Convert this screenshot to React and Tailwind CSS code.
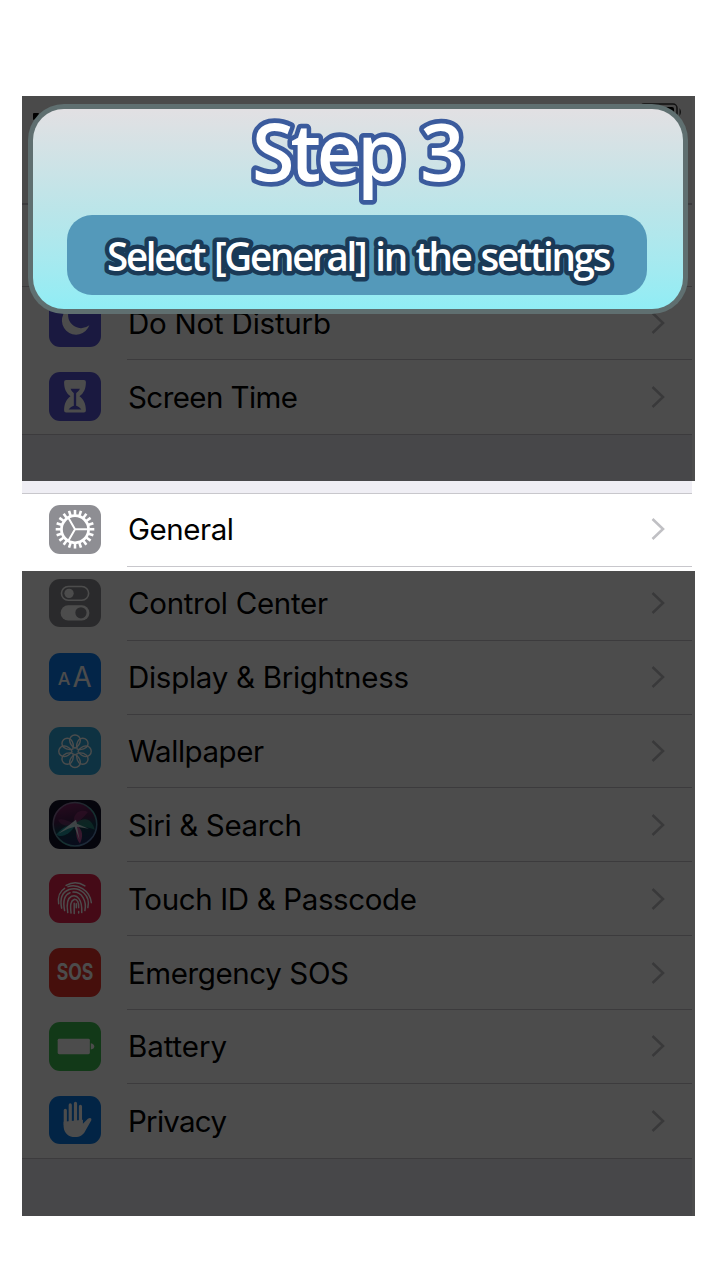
const petals = [0, 45, 90, 135, 180, 225, 270, 315];
const teeth = Array.from({ length: 20 }, (_, i) => i * 18);

const icons = {
  moon: {
    bg: "bg-[#5856d6]",
    art: <path d="M21.500 8.500A14.300 14.300 0 1 0 40.500 26.500A13.200 13.200 0 0 1 21.500 8.500z" fill="#fff" />,
  },
  hourglass: {
    bg: "bg-[#5856d6]",
    art: (
      <>
        <path d="M17 8h18q2 0 2 2c0 7-2 11-6.500 14.500c4.500 3.500 6.500 7.500 6.500 14.500q0 2-2 2H17q-2 0-2-2c0-7 2-11 6.500-14.500C17 21 15 17 15 10q0-2 2-2z" fill="#fff" />
        <path d="M21.500 17H31c-1 2.500-2.800 3.200-3.800 4.500v12.500c1.500.8 4 1.500 5.300 4H19.500c1.300-2.500 3.800-3.200 5.300-4V21.500c-1-1.300-2.500-2-3.300-4.500z" fill="#5856d6" />
      </>
    ),
  },
  gear: {
    bg: "bg-[#8e8e93]",
    art: (
      <g stroke="#fff" fill="none">
        {teeth.map((a) => (
          <path key={a} d="M26 10V5" strokeWidth="2.600" transform={`rotate(${a} 26 24.500)`} />
        ))}
        <circle cx="26" cy="24.500" r="13.700" strokeWidth="2.800" />
        <path d="M26 24.500H40M26 24.500L19 12.500M26 24.500L19 36.500" strokeWidth="2" />
      </g>
    ),
  },
  toggles: {
    bg: "bg-[#8e8e93]",
    art: (
      <>
        <rect x="12.300" y="7.500" width="27.500" height="14" rx="7" fill="none" stroke="#fff" strokeWidth="1.600" />
        <circle cx="20" cy="14.500" r="4.700" fill="#fff" />
        <rect x="11.500" y="26.500" width="29" height="15.500" rx="7.700" fill="#fff" />
        <circle cx="32" cy="34.200" r="5.700" fill="#8e8e93" />
      </>
    ),
  },
  letters: {
    bg: "bg-[#0a7cf2]",
    art: (
      <g fill="#fff" className="font-['Inter',sans-serif]">
        <text x="8.500" y="32" fontSize="18" fontWeight="500">A</text>
        <text x="23.500" y="34" fontSize="28">A</text>
      </g>
    ),
  },
  flower: {
    bg: "bg-[#2fa9dc]",
    art: (
      <g stroke="#fff" strokeWidth="1.400" fill="none" strokeLinejoin="round">
        {petals.map((a) => (
          <path key={a} d="M26 21.500Q21 18.500 20.600 13.500A5.400 5.400 0 1 1 31.400 13.500Q31 18.500 26 21.500z" transform={`rotate(${a} 26 24.500)`} />
        ))}
      </g>
    ),
  },
  siri: {
    bg: "bg-[#121129]",
    art: (
      <>
        <defs>
          <linearGradient id="orb" x1="0.300" y1="0" x2="0.500" y2="1">
            <stop offset="0" stopColor="#862468" />
            <stop offset="0.400" stopColor="#48204f" />
            <stop offset="0.600" stopColor="#123d50" />
            <stop offset="1" stopColor="#20285f" />
          </linearGradient>
          <linearGradient id="ring" x1="0" y1="0" x2="1" y2="1">
            <stop offset="0" stopColor="#a65a98" />
            <stop offset="0.600" stopColor="#45a5a2" />
            <stop offset="1" stopColor="#7777cc" />
          </linearGradient>
        </defs>
        <circle cx="26" cy="24.500" r="22" fill="url(#orb)" stroke="url(#ring)" strokeWidth="1.500" />
        <path d="M25 24C23 14 31 8 39 12C35 17 32 20 27 24z" fill="#bf3f8f" opacity=".45" />
        <path d="M26 24C20 22 14 18 9 20C12 27 20 27 26 24z" fill="#c04a9a" opacity=".35" />
        <path d="M26 24C36 16 43 19 46 30C39 27 33 28 26 24z" fill="#35b998" opacity=".55" />
        <path d="M25 25C17 25 11 30 7 35C13 39 21 34 26 26z" fill="#2ac3c4" opacity=".65" />
        <path d="M27 25C35 30 34 38 31 44C26 38 28 32 26 26z" fill="#e05aa9" opacity=".8" />
        <path d="M9 34L23 23L27 20L28 24L40 29L28 27L30.500 40L25.500 27L19 29z" fill="#e9ffff" opacity=".85" />
      </>
    ),
  },
  finger: {
    bg: "bg-[#e8224e]",
    art: (
      <g stroke="#fff" strokeWidth="1.500" fill="none" strokeLinecap="round">
        <path d="M17 11.500C23 8 30 8 36 12" />
        <path d="M9.500 30C8.500 23 11 17 15.500 14.500M19 12.800C28 9.500 41 16 42.500 29" />
        <path d="M12.500 34.500C10.500 25 13 18.500 20 15.700C31 12 42 22 39 34" />
        <path d="M15.500 37C13.500 27 15.500 21 21 19M24 18.300C33 18 38 27 36 37" />
        <path d="M18.700 39C17 29 18.500 24.500 22.500 22.500C28 20 33.500 26 32.800 39" />
        <path d="M22 39.500C21 31 21.500 27 25.500 25.500C28.500 25.500 30 29 29.700 34M29.700 38V39.500" />
        <path d="M25.200 40V29.500M27.300 30V34" />
      </g>
    ),
  },
  sos: {
    bg: "bg-[#e93329]",
    art: (
      <text x="26" y="32.500" textAnchor="middle" fontSize="22.500" fontWeight="700" fill="#fff" textLength="37" lengthAdjust="spacingAndGlyphs" className="font-['Inter',sans-serif]">SOS</text>
    ),
  },
  battery: {
    bg: "bg-[#3fbf50]",
    art: (
      <>
        <rect x="8.500" y="17" width="32.500" height="15.500" rx="1.500" fill="#fff" />
        <path d="M42 21.500q3.500 1 3.500 3.200t-3.500 3.200z" fill="#fff" />
      </>
    ),
  },
  hand: {
    bg: "bg-[#0879e8]",
    art: (
      <>
        <path d="M14.500 26V31C15 38 20 41.500 26 41.500C31 41.500 34.500 39 36.500 35L42.500 24.500C43 22 41 21.500 39 23L34 28V24z" fill="#fff" />
        <path d="M16.200 29V14.500M21.200 28V9M26.500 28V7.500M31.500 30V10.500" stroke="#fff" strokeWidth="3.200" strokeLinecap="round" />
      </>
    ),
  },
};

const widths = {
  "Do Not Disturb": 203,
  "Screen Time": 170,
  General: 106,
  "Control Center": 200,
  "Display & Brightness": 281,
  Wallpaper: 136,
  "Siri & Search": 174,
  "Touch ID & Passcode": 289,
  "Emergency SOS": 221,
  Battery: 99,
  Privacy: 99,
};

function Row({ icon, label, last = false }) {
  const { bg, art } = icons[icon];
  return (
    <div className="flex h-[73.860px] pl-[27px]">
      <div className={`mt-[12px] h-[48.500px] w-[52px] shrink-0 rounded-[11px] ${bg}`}>
        <svg viewBox="0 0 52 49" className="h-full w-full overflow-visible">{art}</svg>
      </div>
      <div className={`ml-[26px] flex flex-1 items-center justify-between border-[#c8c7cc] pr-[27px] ${last ? "" : "border-b"}`}>
        <svg className="h-[40px] w-[300px] overflow-visible">
          <text x="1" y="31" textLength={widths[label]} className="font-['Inter',sans-serif] text-[29.500px]">{label}</text>
        </svg>
        <svg viewBox="0 0 14 22" className="h-[22px] w-[14px]">
          <path d="M1.500 1L12 11L1.500 21" fill="none" stroke="#c0c0c4" strokeWidth="2.600" />
        </svg>
      </div>
    </div>
  );
}

const general = [
  ["gear", "General"],
  ["toggles", "Control Center"],
  ["letters", "Display & Brightness"],
  ["flower", "Wallpaper"],
  ["siri", "Siri & Search"],
  ["finger", "Touch ID & Passcode"],
  ["sos", "Emergency SOS"],
  ["battery", "Battery"],
  ["hand", "Privacy"],
];

export default function App() {
  return (
    <main className="h-[1280px] w-[720px] bg-white pt-[96px] pl-[22px]">
      <div className="relative h-[1120px] w-[673px]">
        <div className="flex h-full w-[670px] flex-col overflow-hidden bg-[#efeef4]">
          <div className="h-[108px] shrink-0 border-b border-[#c8c7cc] bg-[#f9f9f9]" />
          <div className="h-[82.500px] shrink-0 border-y border-[#c8c7cc] bg-white" />
          <div className="shrink-0 border-b border-[#c8c7cc] bg-white">
            <Row icon="moon" label="Do Not Disturb" />
            <Row icon="hourglass" label="Screen Time" last />
          </div>
          <div className="h-[57.800px] shrink-0" />
          <div className="shrink-0 border-y border-[#c8c7cc] bg-white">
            <div className="-mt-px">
              {general.map(([icon, label], i) => (
                <Row key={label} icon={icon} label={label} last={i === general.length - 1} />
              ))}
            </div>
          </div>
        </div>

        <div className="absolute top-0 left-0 h-[384.500px] w-full bg-black/70" />
        <div className="absolute top-[474.500px] left-0 h-[645.500px] w-full bg-black/70" />

        <svg viewBox="0 0 60 14" className="absolute top-[7px] right-[13px] h-[14px] w-[60px]">
          <rect x="18" y="1" width="37" height="22" rx="4" fill="none" stroke="#111" strokeWidth="1.500" />
          <rect x="21" y="4" width="31" height="16" rx="2" fill="#000" />
          <path d="M57.500 5q3 4 0 8z" fill="#111" />
        </svg>
        <div className="absolute top-[17px] left-[10.500px] h-[7px] w-[6px] rounded-[1px] bg-black" />

        <section className="absolute top-[8px] left-[6px] h-[210px] w-[660px] rounded-[36px] bg-[#5f6f70] p-[5px]">
          <div className="flex h-full flex-col items-center rounded-[31px] bg-linear-to-b from-[#e2e0e3] via-[#bbe5e9] via-50% to-[#90edf5]">
            <svg className="h-[106px] w-full shrink-0 overflow-visible">
              <text transform="translate(219 72) scale(.965 1)" stroke="#3b5b9d" strokeWidth="9.500" strokeLinejoin="round" fill="#fff" className="font-['Open_Sans',sans-serif] text-[80px] font-semibold tracking-[-4.200px] [paint-order:stroke] [word-spacing:3px]">Step 3</text>
            </svg>
            <div className="mr-[2px] h-[80px] w-[580px] shrink-0 rounded-[25px] bg-[#5499ba]">
              <svg className="h-full w-full overflow-visible">
                <text transform="translate(40 56) scale(.975 1)" stroke="#1a3a57" strokeWidth="9" strokeLinejoin="round" fill="#fff" className="font-['Open_Sans',sans-serif] text-[39.500px] font-semibold tracking-[-2.300px] [paint-order:stroke] [word-spacing:2px]">Select [General] in the settings</text>
              </svg>
            </div>
          </div>
        </section>
      </div>
    </main>
  );
}
